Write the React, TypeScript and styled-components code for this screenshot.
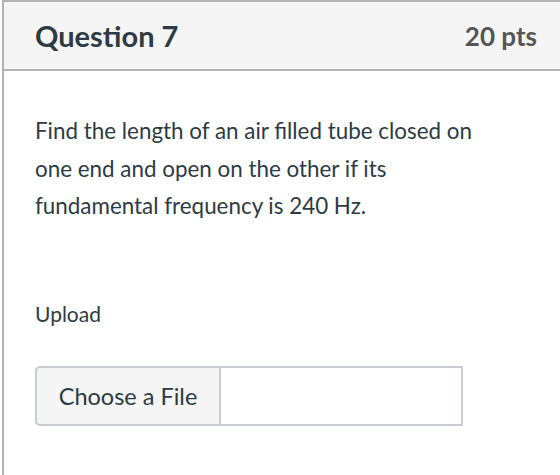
import styled, { createGlobalStyle } from 'styled-components'

const GlobalStyle = createGlobalStyle`
  body {
    margin: 0;
    background: #fff;
    font-family: Lato, 'Open Sans', sans-serif;
    color: #2d3b45;
  }
`

const QuestionCard = styled.div`
  margin-left: 2px;
  width: 558px;
  height: 475px;
  border-top: 2px solid #b4b4b4;
  border-left: 2px solid #b4b4b4;
  box-sizing: border-box;
  background: #fff;
  overflow: hidden;
`

const Header = styled.div`
  display: flex;
  justify-content: space-between;
  align-items: center;
  box-sizing: border-box;
  height: 69px;
  padding: 0 23px 0 31px;
  background: #f5f5f5;
  border-bottom: 2px solid #b4b4b4;
`

const Title = styled.h2`
  margin: 0;
  font-size: 29px;
  font-weight: 700;
  color: #2d3b45;
`

const Points = styled.span`
  font-size: 26px;
  font-weight: 700;
  color: #565656;
`

const Body = styled.div`
  padding: 41px 0 0 31px;
`

const QuestionText = styled.p`
  margin: 0;
  width: 470px;
  font-size: 22.4px;
  line-height: 37.5px;
`

const Label = styled.div`
  margin-top: 76px;
  font-size: 21px;
`

const FileRow = styled.div`
  display: flex;
  margin-top: 40px;
  width: 428px;
  height: 60px;
`

const ChooseButton = styled.button`
  flex: none;
  width: 186px;
  height: 100%;
  border: 2px solid #c7cdd1;
  border-radius: 5px 0 0 5px;
  background: #f5f5f5;
  font-family: inherit;
  font-size: 23.5px;
  color: #2d3b45;
`

const FileName = styled.div`
  flex: 1;
  border: 2px solid #c7cdd1;
  border-left: none;
`

export default function App() {
  return (
    <>
      <GlobalStyle />
      <QuestionCard>
        <Header>
          <Title>Question 7</Title>
          <Points>20 pts</Points>
        </Header>
        <Body>
          <QuestionText>
            Find the length of an air filled tube closed on one end and open
            on the other if its fundamental frequency is 240 Hz.
          </QuestionText>
          <Label>Upload</Label>
          <FileRow>
            <ChooseButton>Choose a File</ChooseButton>
            <FileName />
          </FileRow>
        </Body>
      </QuestionCard>
    </>
  )
}
